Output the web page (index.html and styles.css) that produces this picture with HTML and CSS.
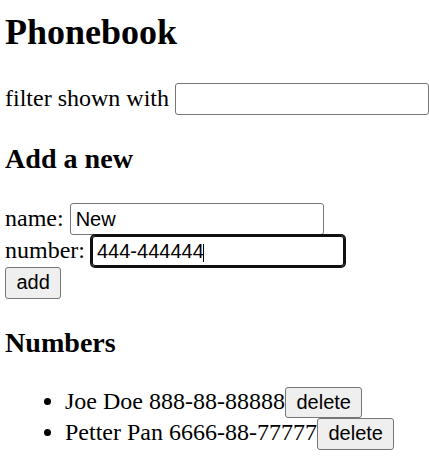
FILE: index.html
```html
<!DOCTYPE html>
<html lang="en">
<head>
<meta charset="utf-8">
<title>Phonebook</title>
<link rel="stylesheet" href="styles.css">
</head>
<body>
<div class="app">
  <h2 class="title">Phonebook</h2>
  <div class="row">filter shown with <input class="field" type="text"></div>
  <h3 class="section">Add a new</h3>
  <form class="entry-form">
    <div class="row">name: <input class="field" type="text" value="New"></div>
    <div class="row">number: <span class="field-wrap"><input class="field field-focused" type="text" value="444-444444"><span class="caret"></span></span></div>
    <div class="row"><button class="btn" type="button">add</button></div>
  </form>
  <h3 class="section">Numbers</h3>
  <ul class="people">
    <li class="person">Joe Doe 888-88-88888<button class="btn" type="button">delete</button></li>
    <li class="person">Petter Pan 6666-88-77777<button class="btn" type="button">delete</button></li>
  </ul>
</div>
</body>
</html>
```
FILE: styles.css
```css
html {
  background: #fff;
}

body {
  margin: 0;
  padding: 11px 0 0 5px;
  font-family: "Liberation Serif", "Times New Roman", serif;
  font-size: 24px;
  color: #000;
}

.title {
  font-size: 36px;
  font-weight: bold;
  margin: 0 0 29.88px;
}

.section {
  font-size: 28.08px;
  font-weight: bold;
  margin: 28.08px 0;
}

.row {
  white-space: nowrap;
}

.entry-form {
  margin: 0;
}

.field {
  box-sizing: border-box;
  width: 254px;
  height: 32px;
  margin: 0;
  padding: 0 5px;
  border: 1px solid #767676;
  border-radius: 3px;
  background: #fff;
  color: #000;
  font: 20px "Liberation Sans", Arial, sans-serif;
  outline: none;
}

.field-wrap {
  position: relative;
  display: inline-block;
}

.field-focused {
  border-color: #101010;
  border-radius: 4px;
  box-shadow: 0 0 0 1px #101010, inset 0 0 0 1px #101010;
}

.caret {
  position: absolute;
  left: 112.5px;
  top: 8.5px;
  width: 1px;
  height: 18px;
  background: #000;
}

.btn {
  box-sizing: border-box;
  height: 31.5px;
  margin: 0;
  padding: 0 10.5px;
  border: 1px solid #767676;
  border-radius: 3px;
  background: #efefef;
  color: #000;
  font: 20px "Liberation Sans", Arial, sans-serif;
}

.people {
  margin: 24px 0;
  padding-left: 60px;
}

.person {
  white-space: nowrap;
}
```
